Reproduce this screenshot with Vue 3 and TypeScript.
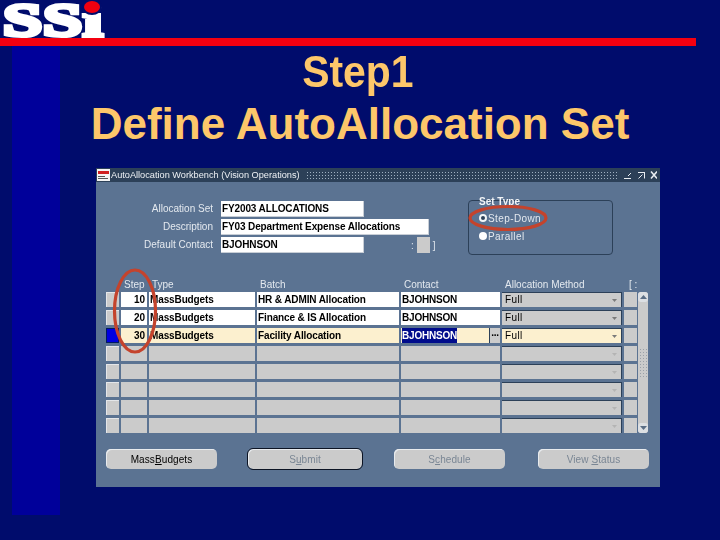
<script setup lang="ts">
interface Row {
  step: string
  type: string
  batch: string
  contact: string
  method: string
}

const filled: Row[] = [
  { step: '10', type: 'MassBudgets', batch: 'HR & ADMIN Allocation', contact: 'BJOHNSON', method: 'Full' },
  { step: '20', type: 'MassBudgets', batch: 'Finance & IS Allocation', contact: 'BJOHNSON', method: 'Full' },
  { step: '30', type: 'MassBudgets', batch: 'Facility Allocation', contact: 'BJOHNSON', method: 'Full' },
]
const empty: Row = { step: '', type: '', batch: '', contact: '', method: '' }
const rows: Row[] = [...filled, ...Array(5).fill(empty)]
const activeRow = 2
</script>

<template>
  <div class="slide">
    <header class="logo-row">
      <div class="logo">
        <span class="logo-text">SSi</span>
        <span class="logo-dot" />
      </div>
    </header>
    <div class="red-rule" />

    <h1 class="title"><span class="title-step">Step1</span><br>Define AutoAllocation Set</h1>

    <section class="window">
      <div class="titlebar">
        <svg class="app-icon" width="13" height="12" viewBox="0 0 13 12">
          <rect width="13" height="12" fill="#f4f4f4" />
          <rect x="1" y="2" width="11" height="3" fill="#d02020" />
          <rect x="1" y="7" width="7" height="1" fill="#555" />
          <rect x="1" y="9" width="10" height="1" fill="#555" />
        </svg>
        <span class="titlebar-text">AutoAllocation Workbench (Vision Operations)</span>
        <span class="titlebar-dots" />
        <svg class="win-icons" width="34" height="10" viewBox="0 0 34 10" fill="none" stroke="#e8edf2">
          <path d="M1 8.5h7M5 6l3-3" />
          <path d="M15 2.5h7M21.500 2.500v6M15.500 8.500l4-4" />
          <path d="M28 1.500l6 7M34 1.500l-6 7" stroke-width="1.500" />
        </svg>
      </div>

      <div class="form-area">
        <div class="fields">
          <label class="field-label">Allocation Set</label>
          <div class="input input-short bold">FY2003 ALLOCATIONS</div>
          <label class="field-label">Description</label>
          <div class="input input-long bold">FY03 Department Expense Allocations</div>
          <label class="field-label">Default Contact</label>
          <div class="contact-line">
            <div class="input input-short bold">BJOHNSON</div>
            <span class="flex-field">
              <i>:</i><b class="flex-box" /><i>]</i>
            </span>
          </div>
        </div>

        <fieldset class="set-type">
          <legend>Set Type</legend>
          <div class="radio-row"><span class="radio radio-on" />Step-Down</div>
          <div class="radio-row"><span class="radio" />Parallel</div>
        </fieldset>
      </div>

      <div class="table-area">
        <div class="table-head">
          <span class="head-step">Step</span>
          <span>Type</span>
          <span>Batch</span>
          <span>Contact</span>
          <span>Allocation Method</span>
          <span class="head-bar">[ :</span>
        </div>
        <div class="table-wrap">
          <div class="table">
            <template v-for="(row, i) in rows" :key="i">
              <div class="cell indicator" :class="{ 'indicator-on': i === activeRow }" />
              <div class="cell step" :class="{ on: row.step, active: i === activeRow }">{{ row.step }}</div>
              <div class="cell bold" :class="{ on: row.type, active: i === activeRow }">{{ row.type }}</div>
              <div class="cell bold" :class="{ on: row.batch, active: i === activeRow }">{{ row.batch }}</div>
              <div class="cell contact bold" :class="{ on: row.contact, active: i === activeRow }">
                <span :class="{ selected: i === activeRow }">{{ row.contact }}</span>
                <span v-if="i === activeRow" class="lov">...</span>
              </div>
              <div class="cell method" :class="{ active: i === activeRow }">
                {{ row.method }}
                <svg class="arrow" width="5" height="3" viewBox="0 0 5 3">
                  <path d="M0 0h5L2.500 3z" :fill="row.method ? '#7a7a7a' : '#b4b4b4'" />
                </svg>
              </div>
              <div class="cell" />
            </template>
          </div>
          <div class="scrollbar">
            <div class="scroll-btn">
              <svg width="7" height="4" viewBox="0 0 7 4"><path d="M3.500 0L7 4H0z" fill="#5a6d85" /></svg>
            </div>
            <div class="scroll-track"><span class="scroll-grip" /></div>
            <div class="scroll-btn">
              <svg width="7" height="4" viewBox="0 0 7 4"><path d="M0 0h7L3.500 4z" fill="#5a6d85" /></svg>
            </div>
          </div>
        </div>
      </div>

      <div class="buttons">
        <button class="btn btn-enabled">Mass<u>B</u>udgets</button>
        <button class="btn btn-default">S<u>u</u>bmit</button>
        <button class="btn">S<u>c</u>hedule</button>
        <button class="btn">View <u>S</u>tatus</button>
      </div>

      <svg class="callouts" width="564" height="319" viewBox="0 0 564 319" fill="none">
        <ellipse cx="412" cy="50" rx="38" ry="11.500" />
        <ellipse cx="39" cy="143" rx="20.500" ry="41" />
      </svg>
    </section>
  </div>
</template>

<style scoped>
.slide {
  position: relative;
  width: 720px;
  height: 540px;
  overflow: hidden;
  background: #000c6c linear-gradient(#00009a, #00009a) no-repeat 12px 46px / 48px 469px;
  font-family: "Liberation Sans", Arial, sans-serif;
}

.logo-row {
  height: 38px;
}

.logo {
  position: relative;
  width: 104px;
  height: 38px;
}

.logo-text {
  display: inline-block;
  font-family: "Liberation Serif", serif;
  font-weight: 700;
  font-size: 47px;
  line-height: 38px;
  letter-spacing: 0.5px;
  color: #fff;
  -webkit-text-stroke: 4px #fff;
  transform: scaleX(1.5);
  transform-origin: left center;
  margin-left: 3px;
  padding-top: 1px;
}

.logo-dot {
  position: absolute;
  left: 84px;
  top: 1px;
  width: 16px;
  height: 12px;
  border-radius: 50%;
  background: #f00010;
  box-shadow: 0 0 0 2px #000c6c;
}

.red-rule {
  width: 696px;
  height: 8px;
  background: #f40010;
}

.title {
  margin: 0;
  height: 122px;
  text-align: center;
  font-size: 44px;
  line-height: 52px;
  font-weight: 700;
  color: #fdc76a;
}

.title-step {
  display: inline-block;
  transform: scaleX(0.93);
  margin-left: -4px;
}

.window {
  position: relative;
  margin-left: 96px;
  width: 564px;
  height: 319px;
  background: #5b7392;
  color: #e4e9ef;
  font-size: 10px;
  filter: blur(0.35px);
}

.titlebar {
  display: flex;
  align-items: center;
  height: 14px;
  background: #2c4058;
  padding: 0 3px 0 1px;
}

.app-icon {
  flex: none;
}

.titlebar-text {
  margin-left: 1px;
  white-space: nowrap;
  font-size: 9.2px;
  color: #eef1f5;
}

.titlebar-dots {
  flex: 1;
  height: 9px;
  margin: 0 6px 0 6px;
  background-image: radial-gradient(#9fb0c2 0.6px, transparent 0.8px);
  background-size: 3px 3px;
}

.win-icons {
  flex: none;
}

.form-area {
  display: flex;
  padding-top: 18px;
  height: 79px;
  box-sizing: border-box;
}

.fields {
  display: grid;
  grid-template-columns: 117px 1fr;
  column-gap: 8px;
  row-gap: 2px;
  width: 372px;
  align-content: start;
  padding-top: 1px;
  box-sizing: border-box;
  grid-auto-rows: 16px;
}

.field-label {
  text-align: right;
  line-height: 16px;
}

.input {
  height: 16px;
  box-sizing: border-box;
  background: #fff;
  color: #000;
  padding-left: 1px;
  line-height: 15px;
  white-space: nowrap;
  border-right: 1px solid #c8ced6;
  border-bottom: 1px solid #c8ced6;
}

.bold {
  font-weight: 700;
  letter-spacing: -0.12px;
}

.input-short {
  width: 143px;
}

.input-long {
  width: 208px;
}

.contact-line {
  display: flex;
  align-items: center;
}

.flex-field {
  display: flex;
  align-items: center;
  margin-left: 47px;
  color: #dfe5ec;
}

.flex-field i {
  font-style: normal;
}

.flex-box {
  width: 13px;
  height: 16px;
  margin: 0 3px 0 3px;
  background: #cbcbcb;
}

.set-type {
  box-sizing: border-box;
  width: 145px;
  height: 55px;
  margin: 0;
  padding: 8px 0 0 10px;
  border: 1px solid #2c4058;
  border-radius: 4px;
  position: relative;
}

.set-type legend {
  position: absolute;
  top: -5px;
  left: 10px;
  padding: 0;
  font-weight: 700;
  color: #f4f6f8;
}

.radio-row {
  display: flex;
  align-items: center;
  height: 18px;
  letter-spacing: 0.4px;
}

.radio {
  box-sizing: border-box;
  width: 8px;
  height: 8px;
  margin: 0 1px 0 0;
  border-radius: 50%;
  background: #fff;
}

.radio-on {
  border: 2px solid #f4f6f8;
  background: #2c4058;
}

.table-area {
  padding-left: 10px;
}

.table-head {
  display: grid;
  grid-template-columns: 31px 108px 144px 101px 122px 20px;
  height: 13px;
  line-height: 12px;
  padding-left: 15px;
  margin-top: 18px;
}

.head-step {
  padding-left: 3px;
}

.head-bar {
  white-space: pre;
  padding-left: 2px;
}

.table-wrap {
  display: flex;
}

.table {
  display: grid;
  grid-template-columns: 13px 26px 106px 142px 99px 120px 13px;
  grid-auto-rows: 15px;
  gap: 3px 2px;
}

.cell {
  background: #cbcbcb;
  color: #000;
  line-height: 15px;
  padding-left: 1px;
  box-sizing: border-box;
  white-space: nowrap;
  overflow: hidden;
}

.cell.on {
  background: #fff;
}

.cell.active {
  background: #fcf0cf;
}

.indicator {
  border-top: 1px solid #e4e6e9;
  border-left: 1px solid #e4e6e9;
  padding: 0;
}

.indicator-on {
  background: #0000e0;
  border: 1px solid #001a60;
}

.step {
  text-align: right;
  padding: 0 2px 0 0;
  font-weight: 700;
}

.contact {
  display: flex;
  justify-content: space-between;
  letter-spacing: -0.2px;
  padding-right: 0;
}

.selected {
  background: #000c8c;
  color: #fff;
}

.lov {
  width: 10px;
  background: #cbcbcb;
  border-left: 1px solid #2c4058;
  text-align: center;
  line-height: 10px;
  font-weight: 700;
}

.method {
  position: relative;
  border-top: 1px solid #2c4058;
  border-right: 1px solid #2c4058;
  padding-left: 3px;
  line-height: 14px;
  letter-spacing: 0.4px;
}

.arrow {
  position: absolute;
  right: 4px;
  top: 6px;
}

.scrollbar {
  display: flex;
  flex-direction: column;
  width: 10px;
  height: 141px;
  margin-left: 1px;
  background: #cbcbcb;
  border-radius: 3px;
}

.scroll-btn {
  display: flex;
  align-items: center;
  justify-content: center;
  height: 10px;
  background: #dcdfe3;
  border-radius: 3px;
}

.scroll-track {
  flex: 1;
  display: flex;
  align-items: center;
  justify-content: center;
}

.scroll-grip {
  width: 8px;
  height: 30px;
  background-image: radial-gradient(#9aa0a8 0.6px, transparent 0.8px);
  background-size: 3px 3px;
}

.buttons {
  display: flex;
  padding: 16px 0 0 10px;
}

.btn {
  height: 20px;
  padding: 0;
  border: 0;
  border-radius: 5px;
  background: #cbcbcb;
  font: 10px "Liberation Sans", Arial, sans-serif;
  color: #7a8694;
  letter-spacing: 0.1px;
  box-shadow: inset 1px 1px 0 #e8ebee;
}

.btn:nth-child(1) {
  width: 111px;
  color: #000;
}

.btn:nth-child(2) {
  width: 114px;
  margin-left: 31px;
  outline: 1px solid #0c1424;
}

.btn:nth-child(3) {
  width: 111px;
  margin-left: 32px;
}

.btn:nth-child(4) {
  width: 111px;
  margin-left: 33px;
}

.callouts {
  position: absolute;
  left: 0;
  top: 0;
  stroke: #c4432c;
  stroke-width: 3.2;
  pointer-events: none;
}
</style>
